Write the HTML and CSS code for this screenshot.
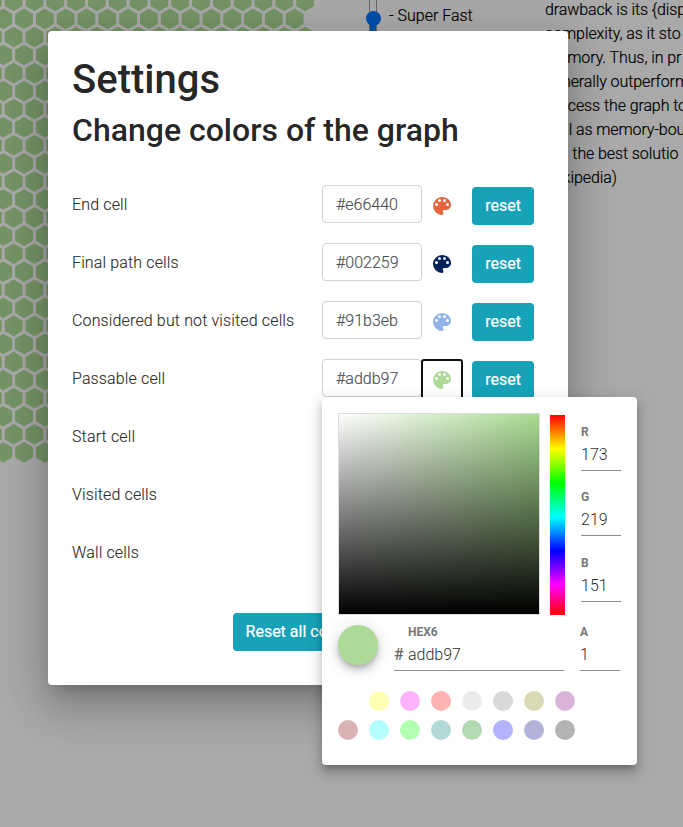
FILE: index.html
```html
<!DOCTYPE html>
<html lang="en">
<head>
<meta charset="utf-8">
<title>Settings</title>
<link rel="stylesheet" href="styles.css">
</head>
<body>
<svg class="symbols" width="0" height="0"><symbol id="board" viewBox="0 0 24 24"><path fill="currentColor" d="M12 3a9 9 0 0 0 0 18c.830 0 1.500-.670 1.500-1.500 0-.390-.150-.740-.390-1.010-.230-.260-.380-.610-.380-.990 0-.830.670-1.500 1.500-1.500H16c2.760 0 5-2.240 5-5 0-4.420-4.030-8-9-8zm-5.500 9a1.500 1.500 0 1 1 0-3 1.500 1.500 0 0 1 0 3zm3-4a1.500 1.500 0 1 1 0-3 1.500 1.500 0 0 1 0 3zm5 0a1.500 1.500 0 1 1 0-3 1.500 1.500 0 0 1 0 3zm3 4a1.500 1.500 0 1 1 0-3 1.500 1.500 0 0 1 0 3z"/></symbol></svg>
<main class="page">
  <svg class="hexes" id="hexes" width="322" height="480"></svg>
  <div class="speed">
    <div class="slider"><div class="thumb"></div></div>
    <span>- Super Fast</span>
  </div>
  <p class="article">drawback is its {disp<br>complexity, as it sto<br>memory. Thus, in pr<br>generally outperform<br>process the graph to<br>well as memory-bou<br>still the best solutio<br>Wikipedia)</p>
</main>
<div class="backdrop"></div>
<section class="dialog">
  <h1>Settings</h1>
  <h2>Change colors of the graph</h2>
  <div class="rows">
    <div class="row"><span class="name">End cell</span><div class="field">#e66440</div><div class="pick red"><svg><use href="#board"/></svg></div><button class="btn">reset</button></div>
    <div class="row"><span class="name">Final path cells</span><div class="field">#002259</div><div class="pick navy"><svg><use href="#board"/></svg></div><button class="btn">reset</button></div>
    <div class="row"><span class="name">Considered but not visited cells</span><div class="field">#91b3eb</div><div class="pick blue"><svg><use href="#board"/></svg></div><button class="btn">reset</button></div>
    <div class="row"><span class="name">Passable cell</span><div class="field">#addb97</div><div class="pick green focused"><svg><use href="#board"/></svg></div><button class="btn">reset</button></div>
    <div class="row"><span class="name">Start cell</span></div>
    <div class="row"><span class="name">Visited cells</span></div>
    <div class="row"><span class="name">Wall cells</span></div>
  </div>
  <button class="btn all">Reset all colors</button>
</section>
<aside class="picker">
  <div class="top">
    <div class="shade"></div>
    <div class="hue"></div>
    <div class="channels">
      <label>R<span>173</span></label>
      <label>G<span>219</span></label>
      <label>B<span>151</span></label>
    </div>
  </div>
  <div class="mid">
    <div class="preview"></div>
    <label class="hex"><b>HEX6</b><span><i>#</i>addb97</span></label>
    <label class="alpha">A<span>1</span></label>
  </div>
  <div class="swatches">
    <i class="w"></i><i class="c1"></i><i class="c2"></i><i class="c3"></i><i class="c4"></i><i class="c5"></i><i class="c6"></i><i class="c7"></i>
    <i class="c8"></i><i class="c9"></i><i class="c10"></i><i class="c11"></i><i class="c12"></i><i class="c13"></i><i class="c14"></i><i class="c15"></i>
  </div>
</aside>
<script src="grid.js"></script>
</body>
</html>
```
FILE: styles.css
```css
* { box-sizing: border-box; }
body { margin: 0; width: 683px; height: 827px; overflow: hidden; background: #fafafa; color: #212529; font: 300 16px/24px Roboto, sans-serif; }
.symbols { position: absolute; }
.page { display: flex; height: 827px; overflow: hidden; -webkit-text-stroke: .2px #000; }
.hexes { flex: none; fill: #addb97; }
.speed { flex: none; display: flex; width: 223px; padding: 4px 0 0 47px; gap: 12px; color: #000; }
.slider { width: 8px; height: 60px; margin-top: -4px; border: 1px solid #999; border-top: 0; background: linear-gradient(transparent 18px, #0075ff 18px); }
.thumb { width: 15px; height: 15px; margin: 10.500px 0 0 -4.500px; border-radius: 50%; background: #0075ff; }
.article { margin: -2px 0 0; flex: none; white-space: nowrap; color: #000; letter-spacing: -.1px; }
.backdrop { position: absolute; inset: 0; background: rgba(0,0,0,.32); }
.dialog { position: absolute; left: 48px; top: 31px; width: 520px; height: 654px; padding: 25px 24px 24px; border-radius: 4px; background: #fff; color: rgba(0,0,0,.87); box-shadow: 0 11px 15px -7px rgba(0,0,0,.2), 0 24px 38px 3px rgba(0,0,0,.14), 0 9px 46px 8px rgba(0,0,0,.12); }
h1, h2 { margin: 0 0 8px; font-weight: 500; line-height: 1.2; }
h1 { margin-bottom: 7px; font-size: 40px; }
h2 { font-size: 32px; }
.rows { margin-top: 36px; }
.row { display: flex; height: 58px; align-items: flex-start; }
.name { width: 250px; padding-top: 8px; letter-spacing: .14px; -webkit-text-stroke: .15px #333; }
.field { width: 100px; height: 38px; padding: 7px 13px 5px; border: 1px solid #ced4da; border-radius: 4px; color: #495057; -webkit-text-stroke: .15px #495057; }
.pick { display: grid; place-items: center; width: 40px; height: 40px; margin-top: 1px; }
.pick svg { width: 24px; height: 24px; }
.focused { border-radius: 2px; outline: 2px solid #101010; outline-offset: -1px; }
.red { color: #e66440; } .navy { color: #002259; } .blue { color: #91b3eb; } .green { color: #addb97; }
.btn { width: 62px; height: 38px; margin: 2px 0 0 10px; padding: 6px 0; border: 0; border-radius: 4px; background: #17a2b8; color: #fff; font: 400 16px/24px Roboto, sans-serif; -webkit-text-stroke: .2px #fff; }
.btn.all { display: block; width: 134px; margin: 22px 0 0 161px; }
.picker { position: absolute; left: 322px; top: 397px; width: 315px; height: 368px; padding: 16px; border-radius: 4px; background: #fff; box-shadow: 0 5px 5px -3px rgba(0,0,0,.2), 0 8px 10px 1px rgba(0,0,0,.14), 0 3px 14px 2px rgba(0,0,0,.12); }
.top { display: flex; height: 211px; }
.shade { width: 202px; height: 202px; border: 1px solid #ddd; background: linear-gradient(to top, #000, transparent), linear-gradient(to right, #fff, #a9db91); }
.hue { width: 15px; height: 200px; margin: 2px 16px 0 10px; background: linear-gradient(red, #ff0 17%, #0f0 34%, #0ff 51%, #00f 68%, #f0f 85%, red); }
.channels { width: 40px; padding-top: 11px; }
.picker label { display: block; color: #777; font-size: 12px; font-weight: 700; line-height: 16px; }
.picker label span { display: block; height: 31px; padding-top: 3px; border-bottom: 1px solid #8c8c8c; color: rgba(0,0,0,.87); font-size: 16px; font-weight: 300; line-height: 24px; }
.channels label { height: 65px; }
.channels label:nth-child(2) { height: 66px; }
.mid { display: flex; height: 67px; }
.preview { width: 40px; height: 40px; margin: 1px 16px 0 0; border-radius: 50%; background: #addb97; box-shadow: 0 3px 5px -1px rgba(0,0,0,.2), 0 6px 10px rgba(0,0,0,.14), 0 1px 18px rgba(0,0,0,.12); }
.picker .hex { width: 170px; margin-right: 16px; }
.hex b { display: block; padding-left: 14px; font-weight: 700; }
.hex i { display: inline-block; width: 14px; color: #666; font-style: normal; font-weight: 500; }
.picker .alpha { width: 40px; }
.picker .hex span, .picker .alpha span { height: 31px; padding-top: 3px; }
.swatches { display: grid; grid-template-columns: repeat(8, 20px); gap: 9px 11px; }
.swatches i { height: 20px; border-radius: 50%; }
.w { background: #fff; } .c1 { background: #ffffb3; } .c2 { background: #ffb3ff; } .c3 { background: #ffb3b3; }
.c4 { background: #ececec; } .c5 { background: #d9d9d9; } .c6 { background: #d9d9b3; } .c7 { background: #d9b3d9; }
.c8 { background: #d9b3b3; } .c9 { background: #b3ffff; } .c10 { background: #b3ffb3; } .c11 { background: #b3d9d9; }
.c12 { background: #b3d9b3; } .c13 { background: #b3b3ff; } .c14 { background: #b3b3d9; } .c15 { background: #b3b3b3; }
```
FILE: grid.js
```js
// Staggered rows of pointy-top hexagons.
const pitch = 20.82, rowPitch = 18.06, radius = 10.3;
let d = '';
for (let row = 0; row < 26; row++) {
  const y = 0.84 + row * rowPitch;
  const start = row % 2 ? 3.2 : -7.2;
  for (let col = 0; col < (row % 2 ? 15 : 16); col++) {
    const x = start + col * pitch;
    for (let k = 0; k < 6; k++) {
      const a = Math.PI / 6 + k * Math.PI / 3;
      d += (k ? 'L' : 'M') + (x + radius * Math.cos(a)).toFixed(2) + ' ' + (y + radius * Math.sin(a)).toFixed(2);
    }
    d += 'Z';
  }
}
document.getElementById('hexes').innerHTML = '<path d="' + d + '"/>';
```
